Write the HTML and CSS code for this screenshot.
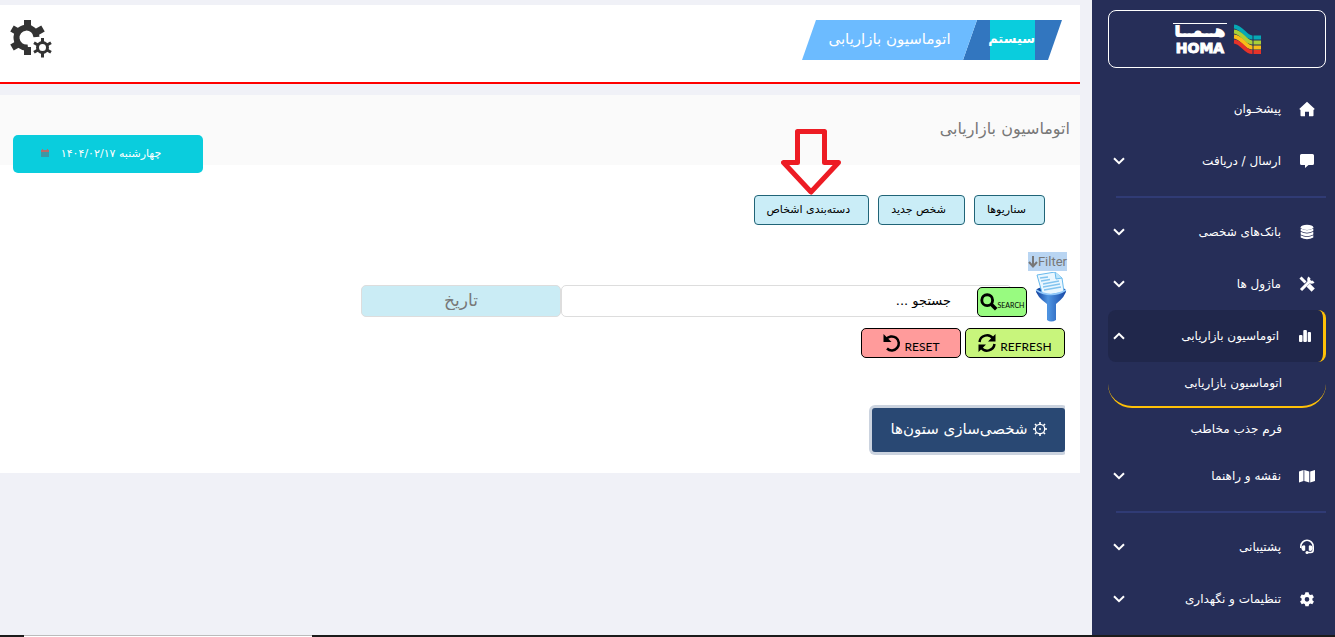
FILE: index.html
```html
<!DOCTYPE html>
<html lang="fa" dir="rtl">
<head>
<meta charset="utf-8">
<meta name="viewport" content="width=device-width, initial-scale=1">
<title>اتوماسیون بازاریابی</title>
<link rel="stylesheet" href="styles.css">
</head>
<body>
<svg class="sprite" aria-hidden="true">
  <symbol id="chevron" viewBox="0 0 12 8"><path d="M1 1.2 6 6.2 11 1.2" fill="none" stroke="currentColor" stroke-width="2"/></symbol>
  <symbol id="gear" viewBox="0 0 24 24"><path fill="currentColor" fill-rule="evenodd" d="M9.600 2h4.800l.7 3 1.900 1.100 3-1 2.400 4.200-2.300 2v2.400l2.300 2-2.400 4.200-3-1-1.900 1.100-.7 3H9.600l-.7-3-1.900-1.100-3 1-2.400-4.200 2.300-2v-2.400l-2.300-2L4 5.100l3 1 1.900-1.100zM12 9a3.500 3.500 0 1 0 0 7 3.500 3.500 0 0 0 0-7z"/></symbol>
</svg>

<div class="shell">
  <aside class="sidebar">
    <a class="logo" href="#" aria-label="هما">
      <svg class="logo-mark" viewBox="0 0 28 30" aria-hidden="true">
        <g fill="none" stroke-width="4">
          <path stroke="#06a9b5" d="M1 2.500C9 3 12 13 19 13.500h9"/>
          <path stroke="#a9cf38" d="M1 7.500C9 8 12 18 19 18.500h9"/>
          <path stroke="#f8bd18" d="M1 12.500C9 13 12 23 19 23.500h9"/>
          <path stroke="#e63329" d="M1 17.500C9 18 12 28 19 28h9"/>
        </g>
        <path d="M20 11v19" stroke="#262e58"/>
      </svg>
      <span class="logo-text"><b class="logo-fa">هـــمـــا</b><b class="logo-en">HOMA</b></span>
    </a>

    <nav class="nav">
      <a class="item" href="#"><svg class="ico" viewBox="0 0 16 16"><path fill="currentColor" d="M8 .8 15.800 8l-1.300 1V14.500q0 .8-.8.8H10v-4.500H6v4.500H2.300q-.8 0-.8-.8V9L.2 8z"/></svg><span>پیشخـوان</span></a>
      <a class="item" href="#"><svg class="ico" viewBox="0 0 16 16"><path fill="currentColor" d="M2.500 1h11q1.500 0 1.500 1.500v8q0 1.500-1.500 1.500H9.500L6 15v-3H2.500Q1 12 1 10.500v-8Q1 1 2.500 1z"/></svg><span>ارسال / دریافت</span><svg class="chev"><use href="#chevron"/></svg></a>
      <hr class="rule">
      <a class="item" href="#"><svg class="ico" viewBox="0 0 16 16"><g fill="currentColor"><ellipse cx="8" cy="3.300" rx="6.300" ry="2.600"/><path d="M1.700 4.500Q8 8 14.300 4.500V7Q8 10.300 1.700 7zM1.700 7.800Q8 11.200 14.300 7.800V10.500Q8 13.800 1.700 10.500zM1.700 11.300Q8 14.700 14.300 11.300v2.200Q8 17 1.700 13.500z"/></g></svg><span>بانک‌های شخصی</span><svg class="chev"><use href="#chevron"/></svg></a>
      <a class="item" href="#"><svg class="ico" viewBox="0 0 16 16"><g fill="none" stroke="currentColor"><path stroke-width="3" d="M1.500 1.500l5 5M2 14 11.500 4.500"/><path stroke-width="4.500" d="M9.200 9.200l5 5"/><path stroke-width="3" d="M10.500 1.500a2.800 2.800 0 1 0 4 4"/></g></svg><span>ماژول ها</span><svg class="chev"><use href="#chevron"/></svg></a>
      <a class="item active" href="#"><svg class="ico" viewBox="0 0 16 16"><g fill="currentColor"><rect x="2" y="7" width="3.500" height="7" rx="1"/><rect x="6.300" y="2" width="3.600" height="12" rx="1"/><rect x="10.700" y="4" width="3.300" height="10" rx="1"/></g></svg><span>اتوماسیون بازاریابی</span><svg class="chev up"><use href="#chevron"/></svg></a>
      <a class="sub current" href="#">اتوماسیون بازاریابی</a>
      <a class="sub" href="#">فرم جذب مخاطب</a>
      <a class="item" href="#"><svg class="ico" viewBox="0 0 16 16"><path fill="currentColor" d="M0 3.500 4.500 2v11L0 14.500zM5.300 2l5 1.500v11l-5-1.500zM11.200 3.500 16 2v11l-4.800 1.500z"/></svg><span>نقشه و راهنما</span><svg class="chev"><use href="#chevron"/></svg></a>
      <hr class="rule">
      <a class="item" href="#"><svg class="ico" viewBox="0 0 16 16"><path fill="none" stroke="currentColor" stroke-width="1.600" d="M1.800 9V7.500a6.200 6.200 0 0 1 12.400 0V11q0 2.500-2.500 2.500H8"/><path fill="currentColor" d="M3 7q2.500-1.500 3.200 0v4.500Q4 12.500 3 11 1.500 9 3 7zM13 7q-2.500-1.500-3.200 0v4.500q2.200 1 3.200-.5 1.500-2 0-4z"/><circle cx="8" cy="13.500" r="1.500" fill="currentColor"/></svg><span>پشتیبانی</span><svg class="chev"><use href="#chevron"/></svg></a>
      <a class="item" href="#"><svg class="ico"><use href="#gear"/></svg><span>تنظیمات و نگهداری</span><svg class="chev"><use href="#chevron"/></svg></a>
    </nav>
  </aside>

  <main class="main">
    <header class="topbar">
      <nav class="crumbs">
        <a class="crumb first" href="#"><span>سیستم</span></a>
        <a class="crumb second" href="#">اتوماسیون بازاریابی</a>
      </nav>
      <button class="settings" type="button" aria-label="تنظیمات">
        <svg viewBox="0 0 42 38"><g fill="none" stroke="#333">
          <path stroke-width="6" d="M26.500 17A10 10 0 1 0 18 27.500"/>
          <path stroke-width="7" d="M17.500 0v8M17.500 27v8M2 8.500l7 4M33 8.500l-7 4M2 27.500l7-4"/>
          <circle cx="32.500" cy="27.500" r="5" stroke-width="3"/>
          <path stroke-width="3" d="M32.500 18v4M32.500 33v4.500M24 22.700l4 2.300M41 22.700 37 25M24 32.300l4-2.300M41 32.300 37 30"/>
        </g></svg>
      </button>
    </header>

    <section class="card">
      <div class="card-head">
        <h1 class="title">اتوماسیون بازاریابی</h1>
        <button class="date" type="button"><span>چهارشنبه ۱۴۰۴/۰۲/۱۷</span><svg class="cal" viewBox="0 0 8 8"><path fill="#3d98a4" d="M0 1h8v7H0z"/><path fill="#b96a68" d="M0 1h8v2H0zM1 0h1v1H1zM6 0h1v1H6z"/></svg></button>
      </div>

      <div class="card-body">
        <div class="actions">
          <button class="action" type="button">سناریوها</button>
          <button class="action" type="button">شخص جدید</button>
          <button class="action pointed" type="button">دسته‌بندی اشخاص
            <svg class="arrow" viewBox="0 0 60 68"><path d="M16.500 3.500h27v31h14L30 64 2.500 34.500h14z" fill="none" stroke="#ed1c24" stroke-width="5" stroke-linejoin="round"/></svg>
          </button>
        </div>

        <div class="filter-label"><label for="q" dir="ltr"><svg class="down" viewBox="0 0 10 12"><path d="M5 0v10M1 6l4 4.500L9 6" fill="none" stroke="#777" stroke-width="2"/></svg>Filter</label></div>

        <form class="filter-row">
          <svg class="funnel" viewBox="0 0 32 50" aria-hidden="true">
            <defs><linearGradient id="blue"><stop stop-color="#123f9c"/><stop offset=".4" stop-color="#4f95e2"/><stop offset="1" stop-color="#1748a6"/></linearGradient></defs>
            <ellipse cx="16" cy="19" rx="15" ry="5" fill="#164aa5"/>
            <path d="M2 3 20 0l7 6 2 14-21 4z" fill="#eaf7ff" stroke="#67b9ed"/>
            <path d="M20 0l1 7 6-1" fill="#bde5fb" stroke="#67b9ed"/>
            <path d="M5 6l8-1M6 9l9-1.500M8 12l16-3M8 15l17-3M9 18l17-3" stroke="#83c4ef" stroke-width="1.300"/>
            <path d="M1 18q15 9 30 0 0 6-10 14v16q-5 3-9 0V32Q1 24 1 18z" fill="url(#blue)"/>
            <path d="M1 18q15 9 30 0" fill="none" stroke="#91c8fa" stroke-width="1.500"/>
          </svg>
          <div class="search">
            <input class="query" id="q" type="text" placeholder="جستجو ...">
            <button class="tool find" type="button" dir="ltr"><svg viewBox="0 0 20 20"><g fill="none" stroke="#000"><circle cx="8" cy="8" r="6" stroke-width="3.200"/><path d="M12.500 12.500 18 18" stroke-width="4"/></g></svg><span>SEARCH</span></button>
          </div>
          <input class="day" type="text" placeholder="تاریخ" aria-label="تاریخ">
        </form>

        <div class="tools">
          <button class="tool refresh" type="button" dir="ltr"><svg viewBox="0 0 18 18"><path d="M1.500 8A7.500 7.500 0 0 1 15 4.500M16.500 10A7.500 7.500 0 0 1 3 13.500" fill="none" stroke="#000" stroke-width="2.500"/><path d="M17.500 0v7.500H10zM.5 18v-7.500H8z"/></svg><span>REFRESH</span></button>
          <button class="tool reset" type="button" dir="ltr"><svg viewBox="0 0 18 18"><path d="M3 5.500A7 7 0 1 1 4 14.500" fill="none" stroke="#000" stroke-width="2.500"/><path d="M.5 0v8H8.500z"/></svg><span>RESET</span></button>
        </div>

        <div class="columns-wrap">
          <button class="columns" type="button"><svg viewBox="0 0 14 14"><g fill="none" stroke="#fff"><circle cx="7" cy="7" r="4.700" stroke-width="1.300"/><path stroke-width="1.600" d="M7 0v2M7 12v2M0 7h2M12 7h2M2 2l1.500 1.500M10.500 10.500 12 12M12 2l-1.500 1.500M3.500 10.500 2 12"/></g><circle cx="7" cy="7" r="1" fill="#fff"/></svg>شخصی‌سازی ستون‌ها</button>
        </div>
      </div>
    </section>
  </main>
</div>
<footer class="taskbar"><div class="task"></div></footer>
</body>
</html>
```

FILE: styles.css
```css
* { box-sizing: border-box; }
body {
  margin: 0;
  min-height: 100vh;
  display: flex;
  flex-direction: column;
  background: #f0f1f7;
  font-family: "DejaVu Sans", sans-serif;
  font-size: 12px;
  color: #000;
}
button, input { font-family: inherit; margin: 0; }
button { cursor: pointer; }
a { color: inherit; text-decoration: none; }
.sprite { display: none; }
.shell { flex: 1; display: flex; gap: 12px; }

.sidebar {
  flex: 0 0 243px;
  background: #262e58;
  color: #fff;
  padding: 10px 9px 10px 16px;
}
.logo {
  display: flex;
  align-items: center;
  justify-content: center;
  gap: 6px;
  height: 58px;
  border: 1px solid #fff;
  border-radius: 8px;
}
.logo-mark { width: 28px; height: 30px; }
.logo-text { display: flex; flex-direction: column; align-items: center; width: 54px; }
.logo-fa {
  width: 54px;
  font-size: 13px;
  line-height: 16px;
  text-align: center;
  white-space: nowrap;
  border-top: 1px solid #fff;
  -webkit-text-stroke: 2px #fff;
}
.logo-en { font-size: 14px; line-height: 16px; -webkit-text-stroke: 1px #fff; }

.nav { display: flex; flex-direction: column; padding-top: 15px; }
.item {
  display: flex;
  align-items: center;
  gap: 18px;
  height: 52px;
  padding: 0 11px 0 5px;
  border-radius: 8px;
}
.ico { width: 16px; height: 16px; flex: none; }
.chev { width: 12px; height: 8px; margin-right: auto; }
.up { transform: rotate(180deg); }
.item.active {
  padding-right: 10px;
  background: #20274b;
  border-right: 3px solid #ffc107;
}
.sub { height: 42px; line-height: 42px; padding-right: 44px; }
.sub.current {
  height: 46px;
  border-bottom: 2px solid #ffc107;
  border-radius: 0 0 24px 24px;
}
.rule { width: calc(100% - 8px); height: 2px; margin: 9px 0 8px auto; border: 0; background: #303b75; align-self: flex-start; }

.main { flex: 1; min-width: 0; padding-top: 5px; }
.topbar {
  display: flex;
  justify-content: space-between;
  align-items: flex-start;
  padding: 15px 18px 22px 10px;
  background: #fff;
  border-bottom: 2px solid #f00;
}
.crumbs { display: flex; font-size: 15px; line-height: 38px; color: #fff; }
.crumb { height: 40px; }
.first {
  width: 99px;
  padding-right: 27px;
  background: #3276bf;
  clip-path: polygon(14px 0, 100% 0, calc(100% - 14px) 100%, 0 100%);
}
.first span { display: block; width: 45px; height: 40px; background: #0acddd; font-size: 13px; font-weight: bold; text-align: center; white-space: nowrap; }
.second {
  width: 175px;
  margin-right: -14px;
  text-align: center;
  background: #6cbbff;
  clip-path: polygon(14px 0, 100% 0, calc(100% - 14px) 100%, 0 100%);
}
.settings { padding: 0; border: 0; background: none; }
.settings svg { display: block; width: 42px; height: 38px; }

.card { margin-top: 11px; background: #fff; }
.card-head {
  display: flex;
  justify-content: space-between;
  align-items: flex-start;
  height: 70px;
  padding: 0 10px 0 13px;
  background: #fafafa;
}
.title { margin: 24px 0 0; font-size: 16px; line-height: 20px; font-weight: normal; color: #777; }
.date {
  display: flex;
  align-items: center;
  justify-content: center;
  gap: 12px;
  width: 190px;
  height: 38px;
  margin-top: 40px;
  padding: 0 14px 2px 0;
  border: 0;
  border-radius: 5px;
  background: #0acddd;
  color: #fff;
  font-size: 11px;
}
.cal { width: 8px; height: 8px; }

.card-body { padding: 30px 15px 21px; }
.actions { display: flex; gap: 9px; padding-right: 20px; }
.action {
  height: 30px;
  padding: 0 18px 2px 12px;
  border: 1px solid #206477;
  border-radius: 4px;
  background: #caedf7;
  font-size: 11px;
}
.pointed { position: relative; }
.arrow { position: absolute; left: 26px; bottom: 28px; width: 60px; height: 68px; }
.filter-label { margin: 27px -2px 0 0; line-height: 19px; height: 19px; }
.filter-label label { display: inline-flex; align-items: center; background: #b9d5f2; color: #777; font-family: Roboto, sans-serif; font-size: 13px; }
.down { width: 10px; height: 12px; }

.filter-row { display: flex; align-items: flex-end; height: 51px; margin-right: -2px; }
.funnel { flex: none; width: 32px; height: 50px; }
.search { position: relative; flex: 0 1 474px; margin-bottom: 5px; padding-right: 23px; }
.query {
  display: block;
  width: 100%;
  height: 32px;
  padding: 0 60px 2px 12px;
  border: 1px solid #ddd;
  border-radius: 5px;
  background: #fff;
  font-size: 13px;
}
.query::placeholder { color: #000; opacity: 1; }
.day {
  width: 200px;
  height: 32px;
  margin-bottom: 5px;
  padding: 0 8px 2px;
  border: 1px solid #ddd;
  border-radius: 5px;
  background: #caecf5;
  font-size: 17px;
  text-align: center;
}
.day::placeholder { color: #777; opacity: 1; }
.tool {
  display: flex;
  align-items: center;
  justify-content: center;
  gap: 4px;
  width: 100px;
  height: 30px;
  padding: 0;
  border: 1px solid #000;
  border-radius: 5px;
  color: #000;
  font-family: Lato, sans-serif;
  font-size: 12px;
}
.tool svg { width: 18px; height: 18px; flex: none; }
.tool span { padding-top: 6px; }
.find { position: absolute; top: 2px; right: 8px; width: 50px; gap: 0; background: #98fb80; font-size: 7px; }
.tools { display: flex; gap: 4px; margin-top: 6px; }
.refresh { background: #c8f57c; }
.reset { background: #ff9b9b; }
.columns-wrap { margin-top: 50px; overflow-x: clip; }
.columns {
  display: flex;
  align-items: center;
  justify-content: center;
  gap: 5px;
  width: 193px;
  height: 44px;
  padding: 0 0 2px;
  border: 0;
  border-radius: 3px;
  background: #294873;
  box-shadow: 0 0 0 3px #cbd3df;
  color: #fff;
  font-size: 15px;
}
.columns svg { width: 14px; height: 14px; }

.taskbar { height: 2px; background: #1b1b1b; direction: ltr; padding-left: 24px; }
.task { width: 288px; height: 2px; background: #fff; border-top: 1px solid #bbb; }
```
